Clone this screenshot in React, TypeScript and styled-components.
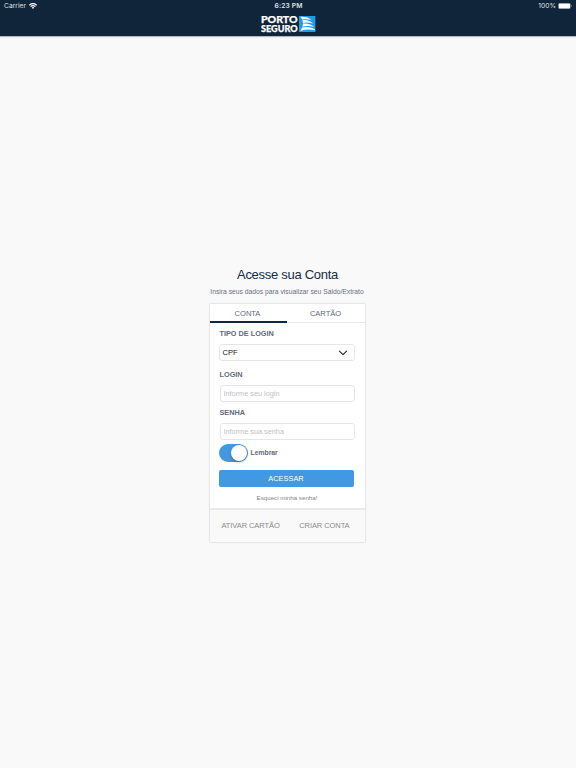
import React, { useState } from "react";
import styled, { createGlobalStyle } from "styled-components";

const GlobalStyle = createGlobalStyle`
  * { box-sizing: border-box; }
  body {
    margin: 0;
    background: #f9f9f9;
    font-family: "Liberation Sans", Arial, sans-serif;
  }
  button, input, select { font-family: inherit; }
`;

const Page = styled.div`
  min-height: 768px;
  display: flex;
  flex-direction: column;
  align-items: center;
`;

const Header = styled.header`
  width: 100%;
  height: 36px;
  background: #10243a;
  box-shadow: 0 1px 1px rgba(16, 36, 58, 0.3);
  display: flex;
  flex-direction: column;
  align-items: center;
`;

const StatusBar = styled.div`
  width: 100%;
  height: 12px;
  padding: 0 4px;
  display: grid;
  grid-template-columns: 1fr auto 1fr;
  align-items: center;
  color: #dfe3e8;
  font-family: Inter, sans-serif;
  font-size: 6.7px;
  line-height: 12px;
`;

const StatusGroup = styled.div<{ $end?: boolean }>`
  display: flex;
  align-items: center;
  justify-content: ${(p) => (p.$end ? "flex-end" : "flex-start")};
  gap: ${(p) => (p.$end ? 2 : 3)}px;
`;

const Clock = styled.span`
  padding-left: 1px;
  font-weight: 600;
  font-size: 6.7px;
  letter-spacing: 0.12px;
`;

const Logo = styled.svg`
  display: block;
  flex: none;
`;

const Main = styled.main`
  width: 157px;
  margin-top: 230px;
  margin-right: 2px;
`;

const Title = styled.h1`
  margin: 0;
  padding-left: 1px;
  font-size: 13px;
  font-weight: 400;
  letter-spacing: -0.28px;
  line-height: 18px;
  text-align: center;
  white-space: nowrap;
  color: #142c45;
`;

const Subtitle = styled.p`
  margin: 0;
  font-size: 6.75px;
  line-height: 15px;
  text-align: center;
  white-space: nowrap;
  color: #6b7280;
`;

const Card = styled.section`
  margin-top: 4px;
  height: 240px;
  border: 1px solid #e7e7e9;
  border-radius: 2px;
  background: #fff;
  box-shadow: 0 0 2px rgba(0, 0, 0, 0.06);
  overflow: hidden;
`;

const Tabs = styled.div`
  display: grid;
  grid-template-columns: 1fr 1fr;
  height: 19px;
  margin-left: -1px;
`;

const Tab = styled.button<{ $active: boolean }>`
  border: 0;
  padding: 0;
  background: transparent;
  box-shadow: inset 0 ${(p) => (p.$active ? "-2px #0f2740" : "-1px #e8e8ea")};
  font-size: 7.6px;
  letter-spacing: -0.05px;
  line-height: 18px;
  color: #626a78;
`;

const Form = styled.form`
  height: 185px;
  padding: 0 9px 0 9px;
  display: flex;
  flex-direction: column;
`;

const Label = styled.label<{ $top: number }>`
  margin-top: ${(p) => p.$top}px;
  padding-left: 1px;
  height: 10px;
  font-size: 7.3px;
  font-weight: 700;
  line-height: 10px;
  color: #626a7b;
`;

const SelectBox = styled.button`
  margin-top: 5px;
  width: 136px;
  height: 17px;
  flex: none;
  padding: 0 6px 0 3px;
  display: flex;
  align-items: center;
  justify-content: space-between;
  border: 1px solid #e3e5e7;
  border-radius: 3px;
  background: #fff;
  font-size: 7.5px;
  line-height: 10px;
  color: #161616;
`;

const Field = styled.input`
  margin: 5px 0 0 1px;
  width: 135px;
  height: 17px;
  flex: none;
  padding: 0 3px;
  border: 1px solid #e3e5e7;
  border-radius: 3px;
  background: #fff;
  font-size: 7.3px;
  color: #333;
  &::placeholder { color: #bfc1c5; opacity: 1; }
`;

const RememberRow = styled.div`
  margin-top: 4px;
  height: 18px;
  display: flex;
  align-items: center;
  gap: 3px;
  font-size: 6.8px;
  line-height: 10px;
  font-weight: 700;
  color: #626a7b;
`;

const Switch = styled.button<{ $on: boolean }>`
  width: 29px;
  height: 18px;
  padding: 1px;
  border: 0;
  border-radius: 9px;
  background: ${(p) => (p.$on ? "#4299e1" : "#e2e2e4")};
  display: flex;
  justify-content: ${(p) => (p.$on ? "flex-end" : "flex-start")};
`;

const Knob = styled.span`
  width: 16px;
  height: 16px;
  border-radius: 50%;
  background: #fff;
  box-shadow: 0 1px 3px rgba(0, 0, 0, 0.3);
`;

const Submit = styled.button`
  margin-top: 8px;
  width: 135px;
  height: 17px;
  flex: none;
  padding: 0;
  border: 0;
  border-radius: 2px;
  background: #4299e3;
  color: #fff;
  font-size: 7.4px;
  line-height: 17px;
`;

const Forgot = styled.a`
  margin-top: 6px;
  font-size: 6.2px;
  line-height: 10px;
  text-align: center;
  color: #858585;
`;

const Footer = styled.footer`
  height: 34px;
  border-top: 2px solid #e9e9ea;
  background: #f9f9f9;
  padding: 0 15px 0 12px;
  display: flex;
  align-items: center;
  justify-content: space-between;
`;

const FooterLink = styled.a`
  font-size: 7.5px;
  letter-spacing: -0.08px;
  line-height: 12px;
  white-space: nowrap;
  color: #8b8b8b;
`;

const WifiIcon = () => (
  <svg width="8" height="6" viewBox="0 0 8 6" fill="none" stroke="#fff" strokeWidth="1.2">
    <path d="M.3 2.2Q4-1.1 7.7 2.2M1.6 3.6Q4 1.6 6.4 3.6" />
    <path d="M2.7 4.6Q4 3.6 5.3 4.6L4 6Z" fill="#fff" stroke="none" />
  </svg>
);

const BatteryIcon = () => (
  <svg width="14" height="6" viewBox="0 0 14 6">
    <rect x=".25" y=".25" width="12.3" height="5.5" rx="1.5" fill="none" stroke="#8996a5" strokeWidth=".5" />
    <rect x=".7" y=".6" width="11.4" height="4.8" rx=".9" fill="#fff" />
    <path d="M13 2V4Q13.8 3.7 13.8 3T13 2Z" fill="#8996a5" />
  </svg>
);

const PortoLogo = () => (
  <Logo width="55" height="21" viewBox="0 -3 55 21" role="img" aria-label="Porto Seguro">
    <g fill="#fff" stroke="#fff" strokeWidth=".25" fontFamily="Lato, sans-serif" fontWeight="900">
      <text x="0" y="8.3" fontSize="10.2" textLength="36.6" lengthAdjust="spacingAndGlyphs">PORTO</text>
      <text x="0" y="16.8" fontSize="9.8" textLength="36.6" lengthAdjust="spacingAndGlyphs">SEGURO</text>
    </g>
    <rect x="38" y="1" width="16.4" height="16" fill="#1c9cea" />
    <g fill="#fff">
      <path d="M39.3 1.7Q46.8 1.4 50.6 5.1Q46 3.8 41.3 4.5Z" />
      <path d="M41.4 5.1Q48 4.5 52.1 8.6Q47 7 42 7.9Z" />
      <path d="M42 8.6Q49 7.8 53.2 12Q47.6 10.3 41.4 11.7Z" />
      <path d="M41.1 12.4Q48.2 10.9 53.9 14.3V15.3Q47 13.3 39.3 15.9Z" />
    </g>
  </Logo>
);

const Chevron = () => (
  <svg width="10" height="6" viewBox="0 0 10 6" fill="none" stroke="#222" strokeWidth="1.1" strokeLinecap="round" strokeLinejoin="round">
    <path d="M1.4 1.1L5 4.6L8.6 1.1" />
  </svg>
);

export default function App() {
  const [tab, setTab] = useState("CONTA");
  const [remember, setRemember] = useState(true);
  return (
    <Page>
      <GlobalStyle />
      <Header>
        <StatusBar>
          <StatusGroup>Carrier <WifiIcon /></StatusGroup>
          <Clock>6:23 PM</Clock>
          <StatusGroup $end>100% <BatteryIcon /></StatusGroup>
        </StatusBar>
        <PortoLogo />
      </Header>
      <Main>
        <Title>Acesse sua Conta</Title>
        <Subtitle>Insira seus dados para visualizar seu Saldo/Extrato</Subtitle>
        <Card>
          <Tabs>
            {["CONTA", "CARTÃO"].map((name) => (
              <Tab key={name} $active={tab === name} onClick={() => setTab(name)}>{name}</Tab>
            ))}
          </Tabs>
          <Form onSubmit={(e) => e.preventDefault()}>
            <Label $top={6}>TIPO DE LOGIN</Label>
            <SelectBox type="button">CPF <Chevron /></SelectBox>
            <Label $top={9} htmlFor="login">LOGIN</Label>
            <Field id="login" placeholder="Informe seu login" />
            <Label $top={6} htmlFor="senha">SENHA</Label>
            <Field id="senha" type="password" placeholder="Informe sua senha" />
            <RememberRow>
              <Switch type="button" role="switch" aria-checked={remember} $on={remember} onClick={() => setRemember(!remember)}>
                <Knob />
              </Switch>
              Lembrar
            </RememberRow>
            <Submit>ACESSAR</Submit>
            <Forgot>Esqueci minha senha!</Forgot>
          </Form>
          <Footer>
            <FooterLink>ATIVAR CARTÃO</FooterLink>
            <FooterLink>CRIAR CONTA</FooterLink>
          </Footer>
        </Card>
      </Main>
    </Page>
  );
}
